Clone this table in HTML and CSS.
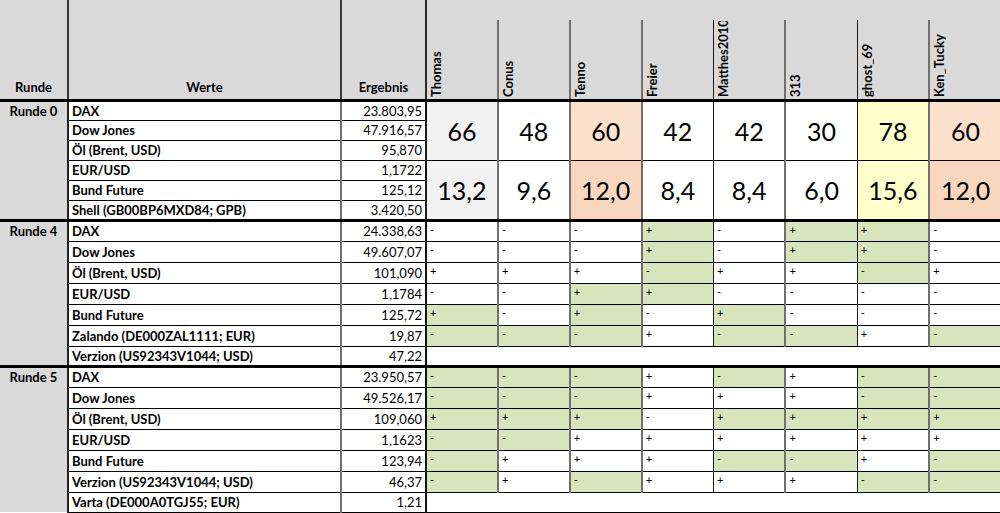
FILE: index.html
```html
<!DOCTYPE html>
<html lang="de">
<head>
<meta charset="utf-8">
<title>Tippspiel</title>
<link rel="stylesheet" href="styles.css">
</head>
<body>
<table class="sheet">
  <colgroup>
    <col class="c-runde"><col class="c-werte"><col class="c-erg">
    <col class="c-p"><col class="c-p"><col class="c-p"><col class="c-p">
    <col class="c-p"><col class="c-p"><col class="c-p"><col class="c-p">
  </colgroup>
  <thead>
    <tr class="h1">
      <th rowspan="2" class="hr">Runde</th>
      <th rowspan="2" class="hw">Werte</th>
      <th rowspan="2" class="he">Ergebnis</th>
      <th colspan="8" class="htop"></th>
    </tr>
    <tr class="h2">
      <th class="hn p1"><div class="name">Thomas</div></th>
      <th class="hn p2"><div class="name">Conus</div></th>
      <th class="hn p3"><div class="name">Tenno</div></th>
      <th class="hn p4"><div class="name">Freier</div></th>
      <th class="hn p5"><div class="name">Matthes2010</div></th>
      <th class="hn p6"><div class="name">313</div></th>
      <th class="hn p7"><div class="name">ghost_69</div></th>
      <th class="hn p8"><div class="name">Ken_Tucky</div></th>
    </tr>
  </thead>
  <tbody class="blk r0">
    <tr>
      <td rowspan="6" class="runde">Runde 0</td>
      <td class="w">DAX</td><td class="e">23.803,95</td>
      <td rowspan="3" class="big p1 gy">66</td>
      <td rowspan="3" class="big p2">48</td>
      <td rowspan="3" class="big p3 pe">60</td>
      <td rowspan="3" class="big p4">42</td>
      <td rowspan="3" class="big p5">42</td>
      <td rowspan="3" class="big p6">30</td>
      <td rowspan="3" class="big p7 ye">78</td>
      <td rowspan="3" class="big p8 pe">60</td>
    </tr>
    <tr><td class="w">Dow Jones</td><td class="e">47.916,57</td></tr>
    <tr><td class="w">Öl (Brent, USD)</td><td class="e">95,870</td></tr>
    <tr>
      <td class="w">EUR/USD</td><td class="e">1,1722</td>
      <td rowspan="3" class="big p1 gy">13,2</td>
      <td rowspan="3" class="big p2">9,6</td>
      <td rowspan="3" class="big p3 pe2">12,0</td>
      <td rowspan="3" class="big p4">8,4</td>
      <td rowspan="3" class="big p5">8,4</td>
      <td rowspan="3" class="big p6">6,0</td>
      <td rowspan="3" class="big p7 ye">15,6</td>
      <td rowspan="3" class="big p8 pe2">12,0</td>
    </tr>
    <tr><td class="w">Bund Future</td><td class="e">125,12</td></tr>
    <tr><td class="w">Shell (GB00BP6MXD84; GPB)</td><td class="e">3.420,50</td></tr>
  </tbody>
  <tbody class="blk r4">
    <tr>
      <td rowspan="7" class="runde">Runde 4</td>
      <td class="w">DAX</td><td class="e">24.338,63</td>
      <td class="s p1">-</td><td class="s p2">-</td><td class="s p3">-</td><td class="s p4 g">+</td>
      <td class="s p5">-</td><td class="s p6 g">+</td><td class="s p7 g">+</td><td class="s p8">-</td>
    </tr>
    <tr>
      <td class="w">Dow Jones</td><td class="e">49.607,07</td>
      <td class="s p1">-</td><td class="s p2">-</td><td class="s p3">-</td><td class="s p4 g">+</td>
      <td class="s p5">-</td><td class="s p6 g">+</td><td class="s p7 g">+</td><td class="s p8">-</td>
    </tr>
    <tr>
      <td class="w">Öl (Brent, USD)</td><td class="e">101,090</td>
      <td class="s p1">+</td><td class="s p2">+</td><td class="s p3">+</td><td class="s p4 g">-</td>
      <td class="s p5">+</td><td class="s p6">+</td><td class="s p7 g">-</td><td class="s p8">+</td>
    </tr>
    <tr>
      <td class="w">EUR/USD</td><td class="e">1,1784</td>
      <td class="s p1">-</td><td class="s p2">-</td><td class="s p3 g">+</td><td class="s p4 g">+</td>
      <td class="s p5">-</td><td class="s p6">-</td><td class="s p7">-</td><td class="s p8">-</td>
    </tr>
    <tr>
      <td class="w">Bund Future</td><td class="e">125,72</td>
      <td class="s p1 g">+</td><td class="s p2">-</td><td class="s p3 g">+</td><td class="s p4">-</td>
      <td class="s p5 g">+</td><td class="s p6">-</td><td class="s p7">-</td><td class="s p8">-</td>
    </tr>
    <tr>
      <td class="w">Zalando (DE000ZAL1111; EUR)</td><td class="e">19,87</td>
      <td class="s p1 g">-</td><td class="s p2 g">-</td><td class="s p3 g">-</td><td class="s p4">+</td>
      <td class="s p5 g">-</td><td class="s p6 g">-</td><td class="s p7">+</td><td class="s p8 g">-</td>
    </tr>
    <tr class="last">
      <td class="w">Verzion (US92343V1044; USD)</td><td class="e">47,22</td>
      <td colspan="8" class="blank p1"></td>
    </tr>
  </tbody>
  <tbody class="blk r5">
    <tr>
      <td rowspan="7" class="runde">Runde 5</td>
      <td class="w">DAX</td><td class="e">23.950,57</td>
      <td class="s p1 g">-</td><td class="s p2 g">-</td><td class="s p3 g">-</td><td class="s p4">+</td>
      <td class="s p5 g">-</td><td class="s p6">+</td><td class="s p7 g">-</td><td class="s p8 g">-</td>
    </tr>
    <tr>
      <td class="w">Dow Jones</td><td class="e">49.526,17</td>
      <td class="s p1 g">-</td><td class="s p2 g">-</td><td class="s p3 g">-</td><td class="s p4">+</td>
      <td class="s p5">+</td><td class="s p6">+</td><td class="s p7 g">-</td><td class="s p8 g">-</td>
    </tr>
    <tr>
      <td class="w">Öl (Brent, USD)</td><td class="e">109,060</td>
      <td class="s p1 g">+</td><td class="s p2 g">+</td><td class="s p3 g">+</td><td class="s p4">-</td>
      <td class="s p5 g">+</td><td class="s p6 g">+</td><td class="s p7 g">+</td><td class="s p8 g">+</td>
    </tr>
    <tr>
      <td class="w">EUR/USD</td><td class="e">1,1623</td>
      <td class="s p1 g">-</td><td class="s p2 g">-</td><td class="s p3">+</td><td class="s p4">+</td>
      <td class="s p5">+</td><td class="s p6">+</td><td class="s p7">+</td><td class="s p8">+</td>
    </tr>
    <tr>
      <td class="w">Bund Future</td><td class="e">123,94</td>
      <td class="s p1 g">-</td><td class="s p2">+</td><td class="s p3">+</td><td class="s p4">+</td>
      <td class="s p5 g">-</td><td class="s p6 g">-</td><td class="s p7">+</td><td class="s p8 g">-</td>
    </tr>
    <tr>
      <td class="w">Verzion (US92343V1044; USD)</td><td class="e">46,37</td>
      <td class="s p1 g">-</td><td class="s p2">+</td><td class="s p3 g">-</td><td class="s p4">+</td>
      <td class="s p5">+</td><td class="s p6">+</td><td class="s p7 g">-</td><td class="s p8 g">-</td>
    </tr>
    <tr class="last">
      <td class="w">Varta (DE000A0TGJ55; EUR)</td><td class="e">1,21</td>
      <td colspan="8" class="blank p1"></td>
    </tr>
  </tbody>
</table>
</body>
</html>
```

FILE: styles.css
```css
html, body {
  margin: 0;
  padding: 0;
  background: #ffffff;
}

.sheet {
  border-collapse: collapse;
  table-layout: fixed;
  width: 1001px;
  font-family: Lato, "Liberation Sans", sans-serif;
  font-size: 13px;
  color: #000;
}

.c-runde { width: 68px; }
.c-werte { width: 273px; }
.c-erg { width: 85px; }
.c-p { width: 71.875px; }

th, td {
  padding: 0;
  overflow: hidden;
  white-space: nowrap;
}

/* header */
thead th {
  background: #d9d9d9;
  font-weight: 700;
  vertical-align: bottom;
  border-bottom: 3px solid #000;
}
.h1 { height: 20px; }
.h2 { height: 80px; }
.hr, .hw, .he {
  text-align: center;
  padding-bottom: 4px;
  line-height: 16px;
}
.hr { border-right: 2px solid #3a3a3a; }
.hw { border-right: 2px solid #3a3a3a; }
.he { border-right: 2px solid #2a2a2a; }
thead .htop {
  border-bottom: none;
}
.hn {
  text-align: left;
  border-top: none;
}
.name {
  height: 76px;
  overflow: hidden;
  writing-mode: vertical-rl;
  transform: rotate(180deg);
  padding-top: 2px;
  padding-right: 2px;
  line-height: 14px;
  font-size: 13px;
}

/* player column separators */
.p1 { border-left: 2px solid #1a1a1a; }
.p2, .p3, .p4, .p6, .p8 { border-left: 2px solid #707070; }
.p5, .p7 { border-left: 1px solid #1a1a1a; }

/* body blocks */
.r0 tr { height: 20px; }
.r4 tr, .r5 tr { height: 21px; }
.r4 tr.last { height: 20px; }
.r5 tr.last { height: 20px; }

.blk tr:first-child td {
  border-top: 3px solid #000;
}

.runde {
  background: #d9d9d9;
  font-weight: 700;
  text-align: center;
  vertical-align: top;
  padding-top: 1px;
  line-height: 17px;
  border-right: 2px solid #222;
}

.w {
  font-weight: 700;
  padding-left: 3px;
  border-bottom: 1px solid #000;
  border-right: 2px solid #707070;
  line-height: 16px;
}

.e {
  text-align: right;
  padding-right: 3px;
  border-bottom: 1px solid #000;
  border-right: 2px solid #111;
  line-height: 16px;
}

.big {
  font-size: 25px;
  text-align: center;
  vertical-align: middle;
  border-bottom: 1px solid #000;
}
.gy { background: #f2f2f2; }
.pe { background: #fce1cd; }
.pe2 { background: #f9d7bf; }
.ye { background: #ffffcc; }

.s {
  font-size: 11px;
  padding-left: 3px;
  padding-bottom: 3px;
  vertical-align: middle;
  border-bottom: 1px solid #000;
  line-height: 12px;
}
.g { background: #d8e4bc; }

.blank {
  background: #fff;
  border-bottom: 1px solid #000;
}
```
